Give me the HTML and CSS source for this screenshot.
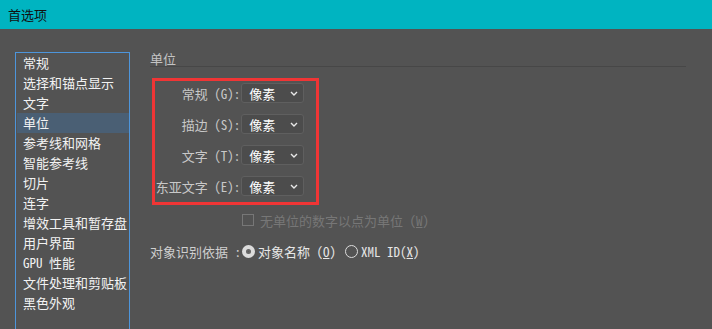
FILE: index.html
```html
<!DOCTYPE html>
<html lang="zh-CN">
<head>
  <meta charset="UTF-8" />
  <title>首选项</title>
  <link rel="stylesheet" href="styles.css">
</head>
<body>
  <div class="titlebar">首选项</div>
  <div class="main">
    <ul class="nav">
      <li>常规</li>
      <li>选择和锚点显示</li>
      <li>文字</li>
      <li class="active">单位</li>
      <li>参考线和网格</li>
      <li>智能参考线</li>
      <li>切片</li>
      <li>连字</li>
      <li>增效工具和暂存盘</li>
      <li>用户界面</li>
      <li>GPU 性能</li>
      <li>文件处理和剪贴板</li>
      <li>黑色外观</li>
    </ul>
    <div class="panel">
      <div class="section-title">单位</div>
      <div class="units">
        <div class="row">
          <label>常规 (G):</label>
          <div class="select"><span>像素</span><svg viewBox="0 0 8 5" width="8" height="5"><path d="M1 1 L4 4 L7 1" /></svg></div>
        </div>
        <div class="row">
          <label>描边 (S):</label>
          <div class="select"><span>像素</span><svg viewBox="0 0 8 5" width="8" height="5"><path d="M1 1 L4 4 L7 1" /></svg></div>
        </div>
        <div class="row">
          <label>文字 (T):</label>
          <div class="select"><span>像素</span><svg viewBox="0 0 8 5" width="8" height="5"><path d="M1 1 L4 4 L7 1" /></svg></div>
        </div>
        <div class="row">
          <label>东亚文字 (E):</label>
          <div class="select"><span>像素</span><svg viewBox="0 0 8 5" width="8" height="5"><path d="M1 1 L4 4 L7 1" /></svg></div>
        </div>
      </div>
      <div class="check disabled">
        <span class="box"></span>
        <span>无单位的数字以点为单位 (<u>W</u>)</span>
      </div>
      <div class="radios">
        <span class="radio-label">对象识别依据 :</span>
        <span class="radio checked"></span>
        <span class="radio-text">对象名称 (<u>O</u>)</span>
        <span class="radio"></span>
        <span class="radio-text">XML ID(<u>X</u>)</span>
      </div>
    </div>
  </div>
</body>
</html>
```

FILE: styles.css
```css
* { box-sizing: border-box; }
body {
  margin: 0;
  background: #535353;
  font-family: "Noto Sans Mono CJK SC", "Noto Sans CJK SC", monospace;
  font-size: 13px;
  color: #cfcfcf;
  height: 329px;
  overflow: hidden;
}
.titlebar {
  height: 29px;
  background: #00b4c1;
  color: #111;
  padding-left: 8px;
  line-height: 29px;
}
.main {
  display: flex;
  padding: 23px 0 0 15px;
}
.nav {
  list-style: none;
  margin: 0;
  padding: 0 0 0 1px;
  width: 115px;
  height: 277px;
  border: 1px solid #4d95db;
  border-bottom: none;
}
.nav li {
  height: 20px;
  line-height: 20px;
  padding-left: 6px;
  color: #f2f2f2;
  white-space: nowrap;
}
.nav li.active { background: #4a5f74; }
.panel {
  margin-left: 20px;
  width: 536px;
}
.section-title {
  color: #c4c4c4;
  line-height: 14px;
  border-bottom: 1px solid #474747;
  height: 15px;
}
.units {
  margin: 11px 0 0 2px;
  width: 167px;
  border: 3px solid #f03535;
  padding: 2px 12px 6px 0;
  display: flex;
  flex-direction: column;
  gap: 11px;
}
.row {
  display: flex;
  align-items: center;
  height: 20px;
}
.row label {
  width: 86px;
  text-align: right;
  color: #c8c8c8;
  white-space: nowrap;
}
.select {
  margin-left: 1px;
  width: 63px;
  height: 20px;
  border: 1px solid #5f5f5f;
  border-radius: 3px;
  background: #4c4c4c;
  display: flex;
  align-items: center;
  justify-content: space-between;
  padding: 0 5px 0 7px;
  color: #fff;
}
.select svg path {
  fill: none;
  stroke: #e8e8e8;
  stroke-width: 1.4;
}
.check {
  display: flex;
  align-items: center;
  margin: 9px 0 0 92px;
  height: 12px;
  gap: 6px;
  color: #777;
}
.check .box {
  width: 12px;
  height: 12px;
  border: 1px solid #777;
}
.radios {
  display: flex;
  align-items: center;
  margin-top: 17px;
  height: 16px;
}
.radio-label {
  width: 92px;
  white-space: nowrap;
  color: #cfcfcf;
}
.radio {
  width: 13px;
  height: 13px;
  border-radius: 50%;
  border: 1.5px solid #dcdcdc;
  margin-right: 3px;
}
.radio.checked {
  border: 4px solid #dcdcdc;
  box-shadow: inset 0 0 0 2px #666;
  background: #555;
}
.radio-text {
  color: #e6e6e6;
  margin-right: 9px;
  white-space: nowrap;
}
```
